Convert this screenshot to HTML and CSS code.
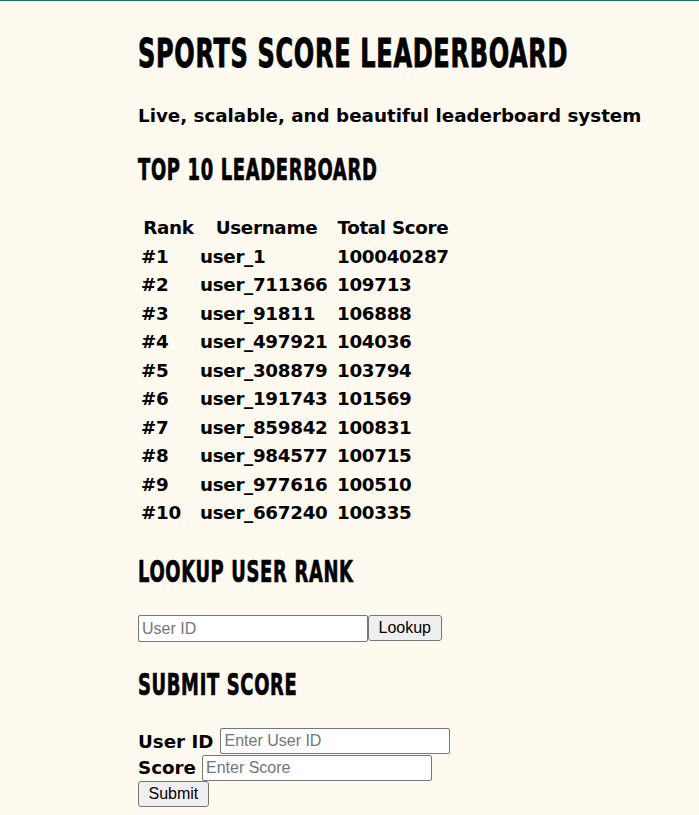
FILE: index.html
```html
<!DOCTYPE html>
<html lang="en">
<head>
<meta charset="utf-8">
<title>Sports Score Leaderboard</title>
<link rel="stylesheet" href="styles.css">
</head>
<body>
<div class="page">
  <h1 class="title">SPORTS SCORE LEADERBOARD</h1>
  <p class="subtitle">Live, scalable, and beautiful leaderboard system</p>

  <h2 class="section">TOP 10 LEADERBOARD</h2>
  <table class="board">
    <thead>
      <tr><th class="col-rank">Rank</th><th class="col-user">Username</th><th class="col-score">Total Score</th></tr>
    </thead>
    <tbody>
      <tr><td>#1</td><td>user_1</td><td>100040287</td></tr>
      <tr><td>#2</td><td>user_711366</td><td>109713</td></tr>
      <tr><td>#3</td><td>user_91811</td><td>106888</td></tr>
      <tr><td>#4</td><td>user_497921</td><td>104036</td></tr>
      <tr><td>#5</td><td>user_308879</td><td>103794</td></tr>
      <tr><td>#6</td><td>user_191743</td><td>101569</td></tr>
      <tr><td>#7</td><td>user_859842</td><td>100831</td></tr>
      <tr><td>#8</td><td>user_984577</td><td>100715</td></tr>
      <tr><td>#9</td><td>user_977616</td><td>100510</td></tr>
      <tr><td>#10</td><td>user_667240</td><td>100335</td></tr>
    </tbody>
  </table>

  <h2 class="section section-gap">LOOKUP USER RANK</h2>
  <div class="lookup">
    <input class="field field-lookup" type="text" placeholder="User ID"><button class="btn" type="button">Lookup</button>
  </div>

  <h2 class="section section-gap">SUBMIT SCORE</h2>
  <form class="submit-form">
    <div class="form-row">
      <label class="label">User ID</label>
      <input class="field" type="text" placeholder="Enter User ID">
    </div>
    <div class="form-row">
      <label class="label">Score</label>
      <input class="field field-score" type="text" placeholder="Enter Score">
    </div>
    <div class="form-row">
      <button class="btn" type="button">Submit</button>
    </div>
  </form>
</div>
</body>
</html>
```

FILE: styles.css
```css
html, body {
  margin: 0;
  padding: 0;
}

body {
  background: #fffaf0;
  border-top: 1px solid #0f7b5c;
  color: #000;
  font-family: "DejaVu Sans", "Noto Sans", sans-serif;
  font-weight: 700;
}

.page {
  padding: 33px 0 0 138px;
}

.title {
  margin: 0;
  font-family: "DejaVu Sans Condensed", "DejaVu Sans", sans-serif;
  font-weight: 700;
  font-size: 39px;
  line-height: 40px;
  letter-spacing: 1px;
  -webkit-text-stroke: 0.9px #000;
  transform: scaleX(0.685);
  transform-origin: left center;
  white-space: nowrap;
}

.subtitle {
  margin: 30px 0 0 0;
  font-size: 18.3px;
  line-height: 24px;
  font-weight: 700;
}

.section {
  margin: 27px 0 0 0;
  font-family: "DejaVu Sans Condensed", "DejaVu Sans", sans-serif;
  font-weight: 700;
  font-size: 29.5px;
  line-height: 30px;
  letter-spacing: 1px;
  -webkit-text-stroke: 0.7px #000;
  transform: scaleX(0.675);
  transform-origin: left center;
  white-space: nowrap;
}

.section-gap {
  margin-top: 28px;
}

.board {
  margin-top: 28px;
  border-collapse: separate;
  border-spacing: 2px;
  font-size: 18.3px;
  line-height: 24.5px;
  font-weight: 700;
  letter-spacing: -0.3px;
}

.board th,
.board td {
  padding: 1px;
  font-weight: 700;
}

.board th {
  text-align: center;
}

.board td {
  text-align: left;
}

.col-rank {
  width: 55px;
}

.col-user {
  width: 133px;
}

.lookup {
  margin-top: 28.5px;
  display: flex;
  align-items: flex-start;
}

.field {
  box-sizing: border-box;
  width: 230px;
  height: 26px;
  margin: 0;
  padding: 1px 3px;
  border: 1px solid #767676;
  border-radius: 2px;
  background: #fff;
  font-family: "Liberation Sans", Arial, sans-serif;
  font-weight: 400;
  font-size: 16px;
  color: #000;
}

.field::placeholder {
  color: #757575;
}

.field-lookup {
  height: 27px;
}

.btn {
  box-sizing: border-box;
  height: 26px;
  margin: 0;
  padding: 0 9.5px;
  border: 1px solid #767676;
  border-radius: 3px;
  background: #efefef;
  font-family: "Liberation Sans", Arial, sans-serif;
  font-weight: 400;
  font-size: 16px;
  color: #000;
}

.submit-form {
  margin: 28px 0 0 0;
  display: flex;
  flex-direction: column;
}

.form-row {
  display: flex;
  align-items: center;
  gap: 7px;
  min-height: 26.5px;
}

.form-row + .form-row .field-score {
  margin-left: -1px;
}

.label {
  font-size: 18.3px;
  font-weight: 700;
}
```
